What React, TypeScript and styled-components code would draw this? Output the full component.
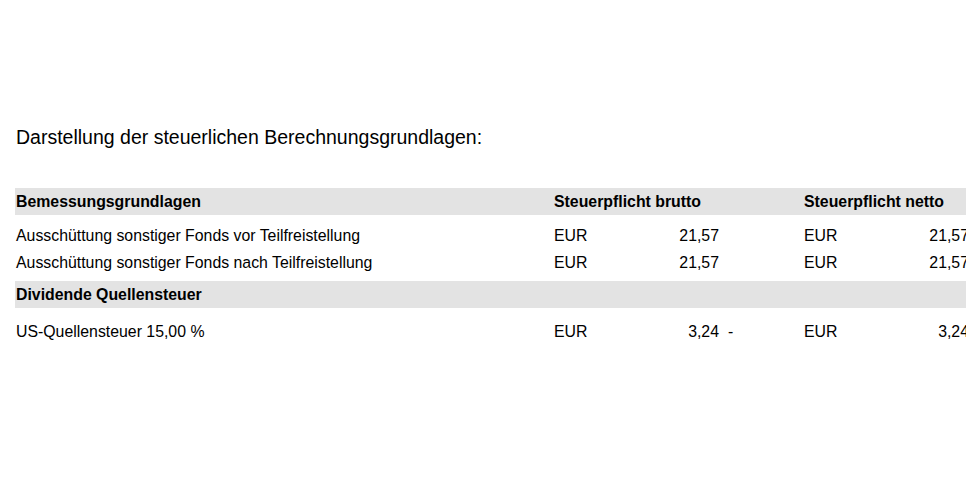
import styled, { createGlobalStyle } from "styled-components";

const GlobalStyle = createGlobalStyle`
  html, body {
    margin: 0;
    padding: 0;
    background: #ffffff;
    overflow: hidden;
  }
  body {
    font-family: "Liberation Sans", Arial, sans-serif;
    color: #000000;
  }
`;

const Page = styled.div`
  width: 966px;
  height: 487px;
  overflow: hidden;
  padding-top: 125px;
  box-sizing: border-box;
`;

const Title = styled.h1`
  margin: 0 0 39px 16px;
  font-size: 19.5px;
  font-weight: normal;
  line-height: 24px;
  white-space: nowrap;
`;

const Row = styled.div<{ $shaded?: boolean; $gap?: number }>`
  display: grid;
  grid-template-columns: 1px 538px 100px 65px 85px 100px 65px;
  height: 27px;
  align-items: center;
  width: 954px;
  margin-left: 15px;
  font-size: 15.85px;
  font-weight: ${(p) => (p.$shaded ? "bold" : "normal")};
  background: ${(p) => (p.$shaded ? "#e3e3e3" : "transparent")};
  margin-top: ${(p) => p.$gap ?? 0}px;
  white-space: nowrap;
`;

const Label = styled.div`
  grid-column: 2;
`;

const Group = styled.div<{ $col: number }>`
  grid-column: ${(p) => p.$col} / span ${(p) => (p.$col === 3 ? 3 : 2)};
`;

const Cur = styled.div<{ $col: number }>`
  grid-column: ${(p) => p.$col};
`;

const Amount = styled.div<{ $col: number }>`
  grid-column: ${(p) => p.$col};
  text-align: right;
`;

const Suffix = styled.div`
  grid-column: 5;
  padding-left: 9px;
`;

type Line = { label: string; amount: string; minus?: boolean };

const AmountRow = ({ line, gap }: { line: Line; gap?: number }) => (
  <Row $gap={gap}>
    <Label>{line.label}</Label>
    <Cur $col={3}>EUR</Cur>
    <Amount $col={4}>{line.amount}</Amount>
    {line.minus && <Suffix>-</Suffix>}
    <Cur $col={6}>EUR</Cur>
    <Amount $col={7}>{line.amount}</Amount>
  </Row>
);

export default function App() {
  return (
    <>
      <GlobalStyle />
      <Page>
        <Title>Darstellung der steuerlichen Berechnungsgrundlagen:</Title>
        <Row $shaded>
          <Label>Bemessungsgrundlagen</Label>
          <Group $col={3}>Steuerpflicht brutto</Group>
          <Group $col={6}>Steuerpflicht netto</Group>
        </Row>
        <AmountRow
          gap={7}
          line={{ label: "Ausschüttung sonstiger Fonds vor Teilfreistellung", amount: "21,57" }}
        />
        <AmountRow
          line={{ label: "Ausschüttung sonstiger Fonds nach Teilfreistellung", amount: "21,57" }}
        />
        <Row $shaded $gap={5}>
          <Label>Dividende Quellensteuer</Label>
        </Row>
        <AmountRow
          gap={10}
          line={{ label: "US-Quellensteuer 15,00 %", amount: "3,24", minus: true }}
        />
      </Page>
    </>
  );
}
